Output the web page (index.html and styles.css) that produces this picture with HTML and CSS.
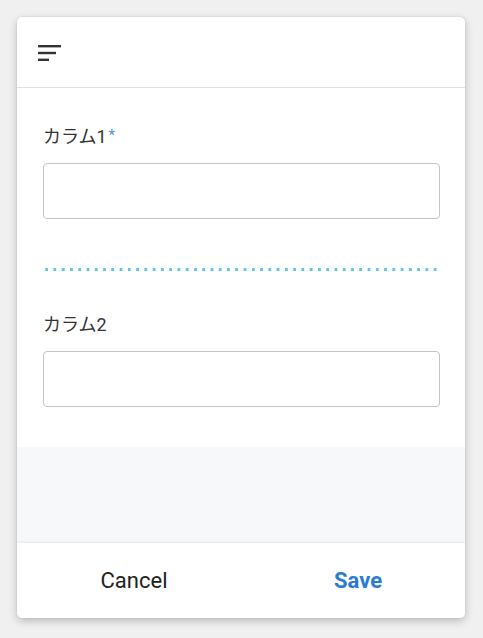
FILE: index.html
```html
<!DOCTYPE html>
<html lang="ja">
<head>
<meta charset="utf-8">
<link rel="stylesheet" href="styles.css">
</head>
<body>
<div class="card">
  <header class="header">
    <svg class="menu-icon" width="24" height="20" viewBox="0 0 24 20">
      <rect x="0" y="1" width="23" height="2.4" fill="#333"/>
      <rect x="0" y="7.8" width="18" height="2.4" fill="#333"/>
      <rect x="0" y="14.6" width="11" height="2.4" fill="#333"/>
    </svg>
  </header>
  <main class="body">
    <div class="field">
      <label class="label">カラム1<span class="req">*</span></label>
      <div class="input"></div>
    </div>
    <div class="divider"></div>
    <div class="field">
      <label class="label">カラム2</label>
      <div class="input"></div>
    </div>
  </main>
  <div class="spacer"></div>
  <footer class="footer">
    <button class="btn cancel">Cancel</button>
    <button class="btn save">Save</button>
  </footer>
</div>
</body>
</html>
```
FILE: styles.css
```css
* { box-sizing: border-box; }
html, body { margin: 0; padding: 0; }
body {
  background: #f0f0f0;
  font-family: Roboto, "Noto Sans CJK JP", sans-serif;
  width: 483px;
  height: 638px;
  padding: 17px 18px 20px 17px;
}
.card {
  background: #fff;
  border-radius: 5px;
  box-shadow: 0 3px 8px rgba(0,0,0,0.22), 0 0 2px rgba(0,0,0,0.12);
  height: 601px;
  display: flex;
  flex-direction: column;
  overflow: hidden;
}
.header {
  height: 71px;
  border-bottom: 1px solid #e0e0e0;
  display: flex;
  align-items: center;
  padding-left: 21px;
  flex: none;
}
.menu-icon { display: block; margin-top: 3px; }
.body {
  padding: 37px 25px 40px 26px;
  flex: none;
}
.label {
  display: block;
  font-size: 18px;
  color: #333;
  line-height: 24px;
  height: 24px;
  margin-bottom: 14px;
}
.req {
  color: #4a8fdc;
  font-size: 15px;
  line-height: 0;
  vertical-align: 3px;
  margin-left: 2px;
}
.input {
  height: 56px;
  border: 1px solid #c4c4c4;
  border-radius: 4px;
}
.divider {
  margin: 49px 0 42px 0;
  height: 3px;
  background-image: radial-gradient(circle, #5cc6ee 1.5px, transparent 1.7px);
  background-size: 8.27px 3px;
  background-position: -0.5px 0;
  background-repeat: repeat-x;
}
.spacer {
  flex: 1;
  background: #f7f8fa;
}
.footer {
  flex: none;
  height: 75px;
  display: grid;
  grid-template-columns: 1fr 1fr;
  box-shadow: 0 -1px 2px rgba(0,0,0,0.08);
  position: relative;
  background: #fff;
}
.btn {
  border: 0;
  background: none;
  font-family: Roboto, sans-serif;
  font-size: 22px;
  padding: 0 0 0 10px;
  cursor: pointer;
}
.cancel { color: #222; }
.save { color: #2b7bd0; font-weight: bold; }
```
